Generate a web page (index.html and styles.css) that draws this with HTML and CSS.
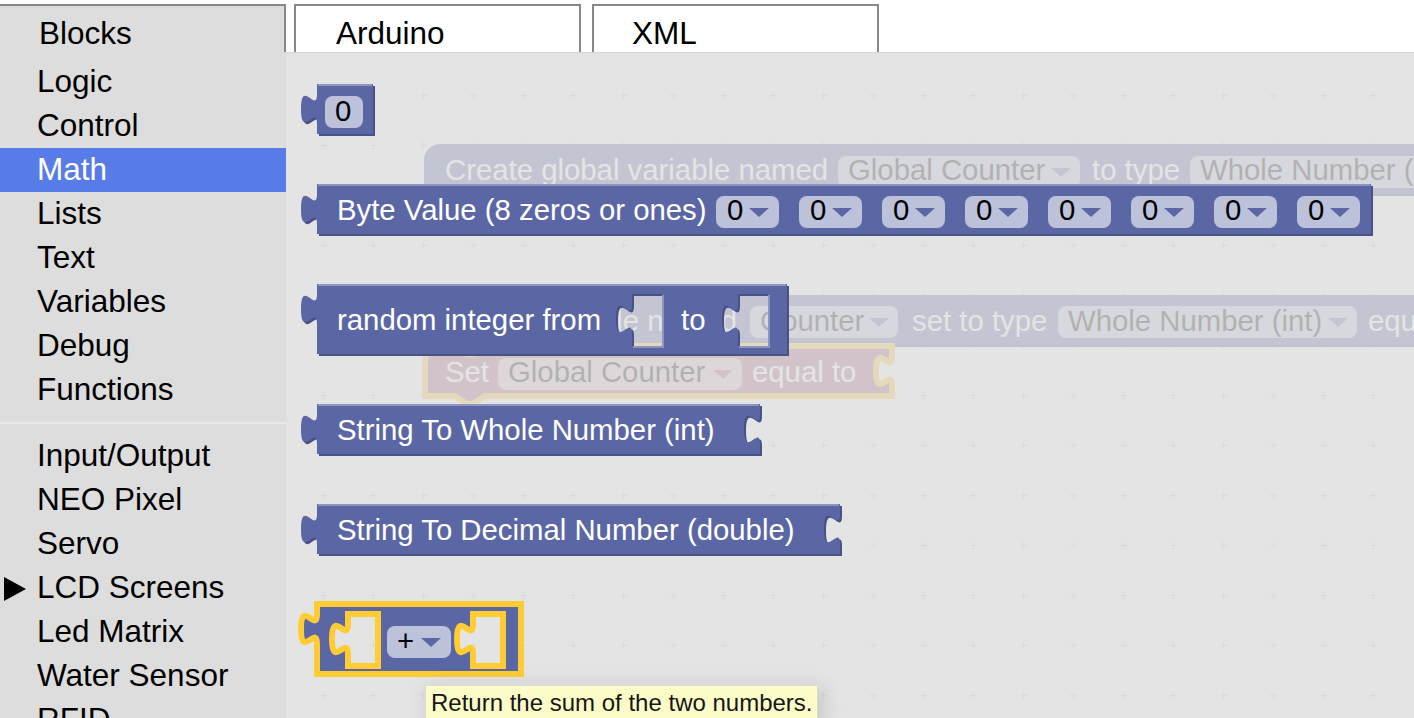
FILE: index.html
```html
<!DOCTYPE html>
<html lang="en">
<head>
<meta charset="utf-8">
<title>Blocks</title>
<link rel="stylesheet" href="styles.css">
</head>
<body>
<div class="app">
  <header class="tabs">
    <div class="tab tab-blocks">Blocks</div>
    <div class="tab tab-arduino">Arduino</div>
    <div class="tab tab-xml">XML</div>
  </header>
  <div class="main">
    <nav class="toolbox">
      <div class="cat">Logic</div>
      <div class="cat">Control</div>
      <div class="cat cat-selected">Math</div>
      <div class="cat">Lists</div>
      <div class="cat">Text</div>
      <div class="cat">Variables</div>
      <div class="cat">Debug</div>
      <div class="cat">Functions</div>
      <div class="sep"></div>
      <div class="cat">Input/Output</div>
      <div class="cat">NEO Pixel</div>
      <div class="cat">Servo</div>
      <div class="cat cat-tree"><span class="twisty"><svg width="22" height="24" viewBox="0 0 22 24"><polygon points="0,0 22,12 0,24"/></svg></span>LCD Screens</div>
      <div class="cat">Led Matrix</div>
      <div class="cat">Water Sensor</div>
      <div class="cat">RFID</div>
    </nav>
    <div class="workspace">
      <svg class="canvas" viewBox="286 53 1128 665" width="1128" height="665">
        <defs>
          <pattern id="grid" patternUnits="userSpaceOnUse" x="298" y="70" width="50" height="50">
            <rect class="grid-dot" x="22" y="25" width="7" height="1"/>
            <rect class="grid-dot" x="25" y="22" width="1" height="7"/>
          </pattern>
        </defs>
        <rect class="ws-bg" x="286" y="53" width="1128" height="665"/>
        <rect class="ws-grid" x="286" y="53" width="1128" height="665"/>

        <!-- workspace block: Create global variable -->
        <g class="wblock">
          <path class="math-dark" transform="translate(2,2)" d="M424,160a16,16 0 0 1 16,-16H1440V194H424Z"/>
          <path class="math" d="M424,160a16,16 0 0 1 16,-16H1440V194H424Z"/>
          <text class="lbl" x="445" y="180">Create global variable named</text>
          <rect class="field" x="838" y="156" width="242" height="32" rx="8"/>
          <text class="fld" x="848" y="180">Global Counter</text>
          <polygon class="arrow-math" points="1051,168 1071,168 1061,177"/>
          <text class="lbl" x="1092" y="180">to type</text>
          <rect class="field" x="1190" y="156" width="300" height="32" rx="8"/>
          <text class="fld" x="1200" y="180">Whole Number (int)</text>
        </g>

        <!-- workspace block: local variable -->
        <g class="wblock">
          <path class="math-dark" transform="translate(2,2)" d="M352,311a16,16 0 0 1 16,-16H1440V345H352Z"/>
          <path class="math" d="M352,311a16,16 0 0 1 16,-16H1440V345H352Z"/>
          <text class="lbl" x="737" y="331" text-anchor="end">Create local variable named</text>
          <rect class="field" x="750" y="306" width="148" height="32" rx="8"/>
          <text class="fld" x="760" y="331">Counter</text>
          <polygon class="arrow-math" points="869,318 889,318 879,327"/>
          <text class="lbl" x="912" y="331">set to type</text>
          <rect class="field" x="1058" y="306" width="299" height="32" rx="8"/>
          <text class="fld" x="1068" y="331">Whole Number (int)</text>
          <polygon class="arrow-math" points="1328,318 1348,318 1338,327"/>
          <text class="lbl" x="1368" y="331">equal to</text>
        </g>

        <!-- workspace block: Set (selected) -->
        <g class="wblock">
          <path class="var sel" d="M425,362a16,16 0 0 1 16,-16H455l12,8h6l12,-8H892v10c0,20 -16,-16 -16,15s16,-5 16,15V396H485l-12,8h-6l-12,-8H425Z"/>
          <text class="lbl" x="445" y="382">Set</text>
          <rect class="field" x="498" y="358" width="244" height="32" rx="8"/>
          <text class="fld" x="508" y="382">Global Counter</text>
          <polygon class="arrow-var" points="713,370 733,370 723,379"/>
          <text class="lbl" x="752" y="382">equal to</text>
        </g>

        <!-- flyout background -->
        <rect class="veil" x="286" y="53" width="1128" height="665"/>

        <!-- flyout block: number -->
        <g class="fblock">
          <path class="math-dark" transform="translate(2,2)" d="M317,84H373V134H317V124c0,-20 -16,16 -16,-15s16,5 16,-15Z"/>
          <path class="math" d="M317,84H373V134H317V124c0,-20 -16,16 -16,-15s16,5 16,-15Z"/>
          <path class="math-light" d="M318,85H372"/>
          <rect class="field" x="325" y="96" width="38" height="32" rx="8"/>
          <text class="fld" x="335" y="121">0</text>
        </g>

        <!-- flyout block: byte value -->
        <g class="fblock">
          <path class="math-dark" transform="translate(2,2)" d="M317,184H1371V234H317V224c0,-20 -16,16 -16,-15s16,5 16,-15Z"/>
          <path class="math" d="M317,184H1371V234H317V224c0,-20 -16,16 -16,-15s16,5 16,-15Z"/>
          <path class="math-light" d="M318,185H1370"/>
          <text class="lbl" x="337" y="220">Byte Value (8 zeros or ones)</text>
          <rect class="field" x="716" y="196" width="63" height="32" rx="8"/>
          <text class="fld" x="727" y="220">0</text>
          <polygon class="arrow-math" points="749,208 769,208 759,217"/>
          <rect class="field" x="799" y="196" width="63" height="32" rx="8"/>
          <text class="fld" x="810" y="220">0</text>
          <polygon class="arrow-math" points="832,208 852,208 842,217"/>
          <rect class="field" x="882" y="196" width="63" height="32" rx="8"/>
          <text class="fld" x="893" y="220">0</text>
          <polygon class="arrow-math" points="915,208 935,208 925,217"/>
          <rect class="field" x="965" y="196" width="63" height="32" rx="8"/>
          <text class="fld" x="976" y="220">0</text>
          <polygon class="arrow-math" points="998,208 1018,208 1008,217"/>
          <rect class="field" x="1048" y="196" width="63" height="32" rx="8"/>
          <text class="fld" x="1059" y="220">0</text>
          <polygon class="arrow-math" points="1081,208 1101,208 1091,217"/>
          <rect class="field" x="1131" y="196" width="63" height="32" rx="8"/>
          <text class="fld" x="1142" y="220">0</text>
          <polygon class="arrow-math" points="1164,208 1184,208 1174,217"/>
          <rect class="field" x="1214" y="196" width="63" height="32" rx="8"/>
          <text class="fld" x="1225" y="220">0</text>
          <polygon class="arrow-math" points="1247,208 1267,208 1257,217"/>
          <rect class="field" x="1297" y="196" width="63" height="32" rx="8"/>
          <text class="fld" x="1308" y="220">0</text>
          <polygon class="arrow-math" points="1330,208 1350,208 1340,217"/>
        </g>

        <!-- flyout block: random integer -->
        <g class="fblock">
          <path class="math-dark holes" transform="translate(2,2)" d="M317,284H787V354H317V324c0,-20 -16,16 -16,-15s16,5 16,-15Z M632,294H662V346H632V334c0,-20 -16,16 -16,-15s16,5 16,-15Z M738,294H768V346H738V334c0,-20 -16,16 -16,-15s16,5 16,-15Z"/>
          <path class="math holes" d="M317,284H787V354H317V324c0,-20 -16,16 -16,-15s16,5 16,-15Z M632,294H662V346H632V334c0,-20 -16,16 -16,-15s16,5 16,-15Z M738,294H768V346H738V334c0,-20 -16,16 -16,-15s16,5 16,-15Z"/>
          <path class="math-light" d="M318,285H786 M663,295V347H633 M769,295V347H739"/>
          <text class="lbl" x="337" y="330">random integer from</text>
          <text class="lbl" x="681" y="330">to</text>
        </g>

        <!-- flyout block: string to int -->
        <g class="fblock">
          <path class="math-dark" transform="translate(2,2)" d="M317,404H760v10c0,20 -16,-16 -16,15s16,-5 16,15V454H317V444c0,-20 -16,16 -16,-15s16,5 16,-15Z"/>
          <path class="math" d="M317,404H760v10c0,20 -16,-16 -16,15s16,-5 16,15V454H317V444c0,-20 -16,16 -16,-15s16,5 16,-15Z"/>
          <path class="math-light" d="M318,405H759"/>
          <text class="lbl" x="337" y="440">String To Whole Number (int)</text>
        </g>

        <!-- flyout block: string to double -->
        <g class="fblock">
          <path class="math-dark" transform="translate(2,2)" d="M317,504H840v10c0,20 -16,-16 -16,15s16,-5 16,15V554H317V544c0,-20 -16,16 -16,-15s16,5 16,-15Z"/>
          <path class="math" d="M317,504H840v10c0,20 -16,-16 -16,15s16,-5 16,15V554H317V544c0,-20 -16,16 -16,-15s16,5 16,-15Z"/>
          <path class="math-light" d="M318,505H839"/>
          <text class="lbl" x="337" y="540">String To Decimal Number (double)</text>
        </g>

        <!-- flyout block: arithmetic (selected) -->
        <g class="fblock">
          <path class="math holes sel" d="M317,604H521V674H317V644c0,-20 -16,16 -16,-15s16,5 16,-15Z M348,614H378V666H348V654c0,-20 -16,16 -16,-15s16,5 16,-15Z M473,614H503V666H473V654c0,-20 -16,16 -16,-15s16,5 16,-15Z"/>
          <rect class="field" x="387" y="626" width="64" height="32" rx="8"/>
          <text class="fld" x="397" y="651">+</text>
          <polygon class="arrow-math" points="421,638 441,638 431,647"/>
        </g>
      </svg>
      <div class="tooltip">Return the sum of the two numbers.</div>
    </div>
  </div>
</div>
</body>
</html>
```
FILE: styles.css
```css
* {
  box-sizing: border-box;
}

html,
body {
  margin: 0;
  height: 100%;
}

body {
  background: #fff;
  font-family: "Liberation Sans", Arial, Helvetica, sans-serif;
  overflow: hidden;
}

.app {
  width: 1414px;
  height: 718px;
  display: flex;
  flex-direction: column;
  overflow: hidden;
}

/* ---------- tabs ---------- */
.tabs {
  flex: none;
  display: flex;
  height: 52px;
  padding-top: 4px;
}

.tab {
  width: 287px;
  height: 48px;
  border: 2px solid #888;
  border-bottom: 0;
  padding: 11px 0 0 39px;
  background: #fff;
  color: #000;
  font-size: 31.5px;
  line-height: 32px;
  white-space: nowrap;
}

.tab-blocks {
  width: 288px;
  margin-left: -2px;
  background: #ddd;
}

.tab-arduino {
  margin-left: 8px;
  padding-left: 40px;
}

.tab-xml {
  margin-left: 11px;
  padding-left: 38px;
}

/* ---------- main ---------- */
.main {
  flex: 1;
  display: flex;
  min-height: 0;
}

.toolbox {
  flex: none;
  width: 286px;
  background: #ddd;
  padding-top: 8px;
  overflow: hidden;
}

.cat {
  height: 44px;
  padding: 1px 0 2px 37px;
  font-size: 31.5px;
  line-height: 41px;
  color: #000;
  white-space: nowrap;
}

.cat-selected {
  background: #577ce8;
  color: #fff;
}

.cat-tree {
  display: flex;
  padding-left: 4px;
}

.twisty {
  flex: none;
  width: 33px;
}

.twisty svg {
  display: block;
  margin-top: 10px;
  fill: #000;
}

.sep {
  height: 2px;
  margin: 10px 0 10px;
  background: #e9e9e9;
}

/* ---------- workspace ---------- */
.workspace {
  flex: 1;
  position: relative;
  border-top: 1px solid #d4d4d4;
  background: #e4e4e4;
  overflow: hidden;
}

.canvas {
  display: block;
}

.ws-bg {
  fill: #fff;
}

.ws-grid {
  fill: url(#grid);
}

.grid-dot {
  fill: #ccc;
}

.veil {
  fill: #ddd;
  fill-opacity: 0.8;
}

.math {
  fill: #5b67a5;
}

.math-dark {
  fill: #495285;
}

.math-light {
  fill: none;
  stroke: #8c95c1;
  stroke-width: 2;
}

.holes {
  fill-rule: evenodd;
}

.var {
  fill: #a65b80;
}

.sel {
  stroke: #fc3;
  stroke-width: 6;
}

.field {
  fill: #fff;
  fill-opacity: 0.6;
}

.arrow-math {
  fill: #5b67a5;
}

.arrow-var {
  fill: #a65b80;
}

.lbl,
.fld {
  font-family: "Liberation Sans", Arial, Helvetica, sans-serif;
  font-size: 29.33px;
}

.lbl {
  fill: #fff;
}

.fld {
  fill: #000;
}

.tooltip {
  position: absolute;
  left: 139px;
  top: 632px;
  padding: 3px 4px 2px 5px;
  border: 1px solid #ddc;
  background: #ffffc7;
  box-shadow: 4px 4px 20px 1px rgba(0, 0, 0, 0.15);
  opacity: 0.9;
  color: #000;
  font-size: 24px;
  white-space: nowrap;
}
```
